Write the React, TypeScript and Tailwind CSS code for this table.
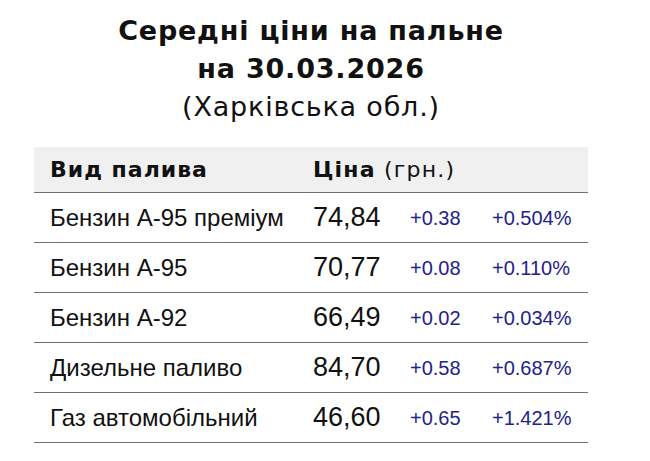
import React from 'react';

type Row = { name: string; price: string; diff: string; pct: string };

const rows: Row[] = [
    { name: 'Бензин А-95 преміум', price: '74,84', diff: '+0.38', pct: '+0.504%' },
    { name: 'Бензин А-95', price: '70,77', diff: '+0.08', pct: '+0.110%' },
    { name: 'Бензин А-92', price: '66,49', diff: '+0.02', pct: '+0.034%' },
    { name: 'Дизельне паливо', price: '84,70', diff: '+0.58', pct: '+0.687%' },
    { name: 'Газ автомобільний', price: '46,60', diff: '+0.65', pct: '+1.421%' },
];

export default function App() {
    return (
        <div className="w-[650px] h-[461px] bg-white overflow-hidden">
            <div className="ml-[34px] w-[554px] pt-[12px]">
                <div className="text-center text-[#111] font-['DejaVu_Sans',sans-serif] text-[27px] leading-[38px] tracking-[0.8px]">
                    <div className="font-bold">Середні ціни на пальне</div>
                    <div className="font-bold">на 30.03.2026</div>
                    <div>(Харківська обл.)</div>
                </div>

                <div className="mt-[21px] font-['Liberation_Sans',Arial,sans-serif]">
                    <div className="flex items-center h-[46px] bg-[#f0f0f0] border-b border-[#6f6f80]">
                        <div className="w-[279px] pl-[16px] font-['DejaVu_Sans',sans-serif] font-bold text-[22px] tracking-[1px] text-[#111]">
                            Вид палива
                        </div>
                        <div className="font-['DejaVu_Sans',sans-serif] text-[22px] tracking-[1.2px] text-[#111]">
                            <span className="font-bold">Ціна</span> (грн.)
                        </div>
                    </div>
                    {rows.map((r) => (
                        <div key={r.name} className="flex items-center h-[50px] border-b border-[#6f6f80]">
                            <div className="w-[279px] pl-[16px] text-[24px] text-[#111]">{r.name}</div>
                            <div className="w-[97px] text-[27px] text-[#111]">{r.price}</div>
                            <div className="w-[82px] text-[20px] text-[#22228a]">{r.diff}</div>
                            <div className="text-[20px] text-[#22228a]">{r.pct}</div>
                        </div>
                    ))}
                </div>
            </div>
        </div>
    );
}
